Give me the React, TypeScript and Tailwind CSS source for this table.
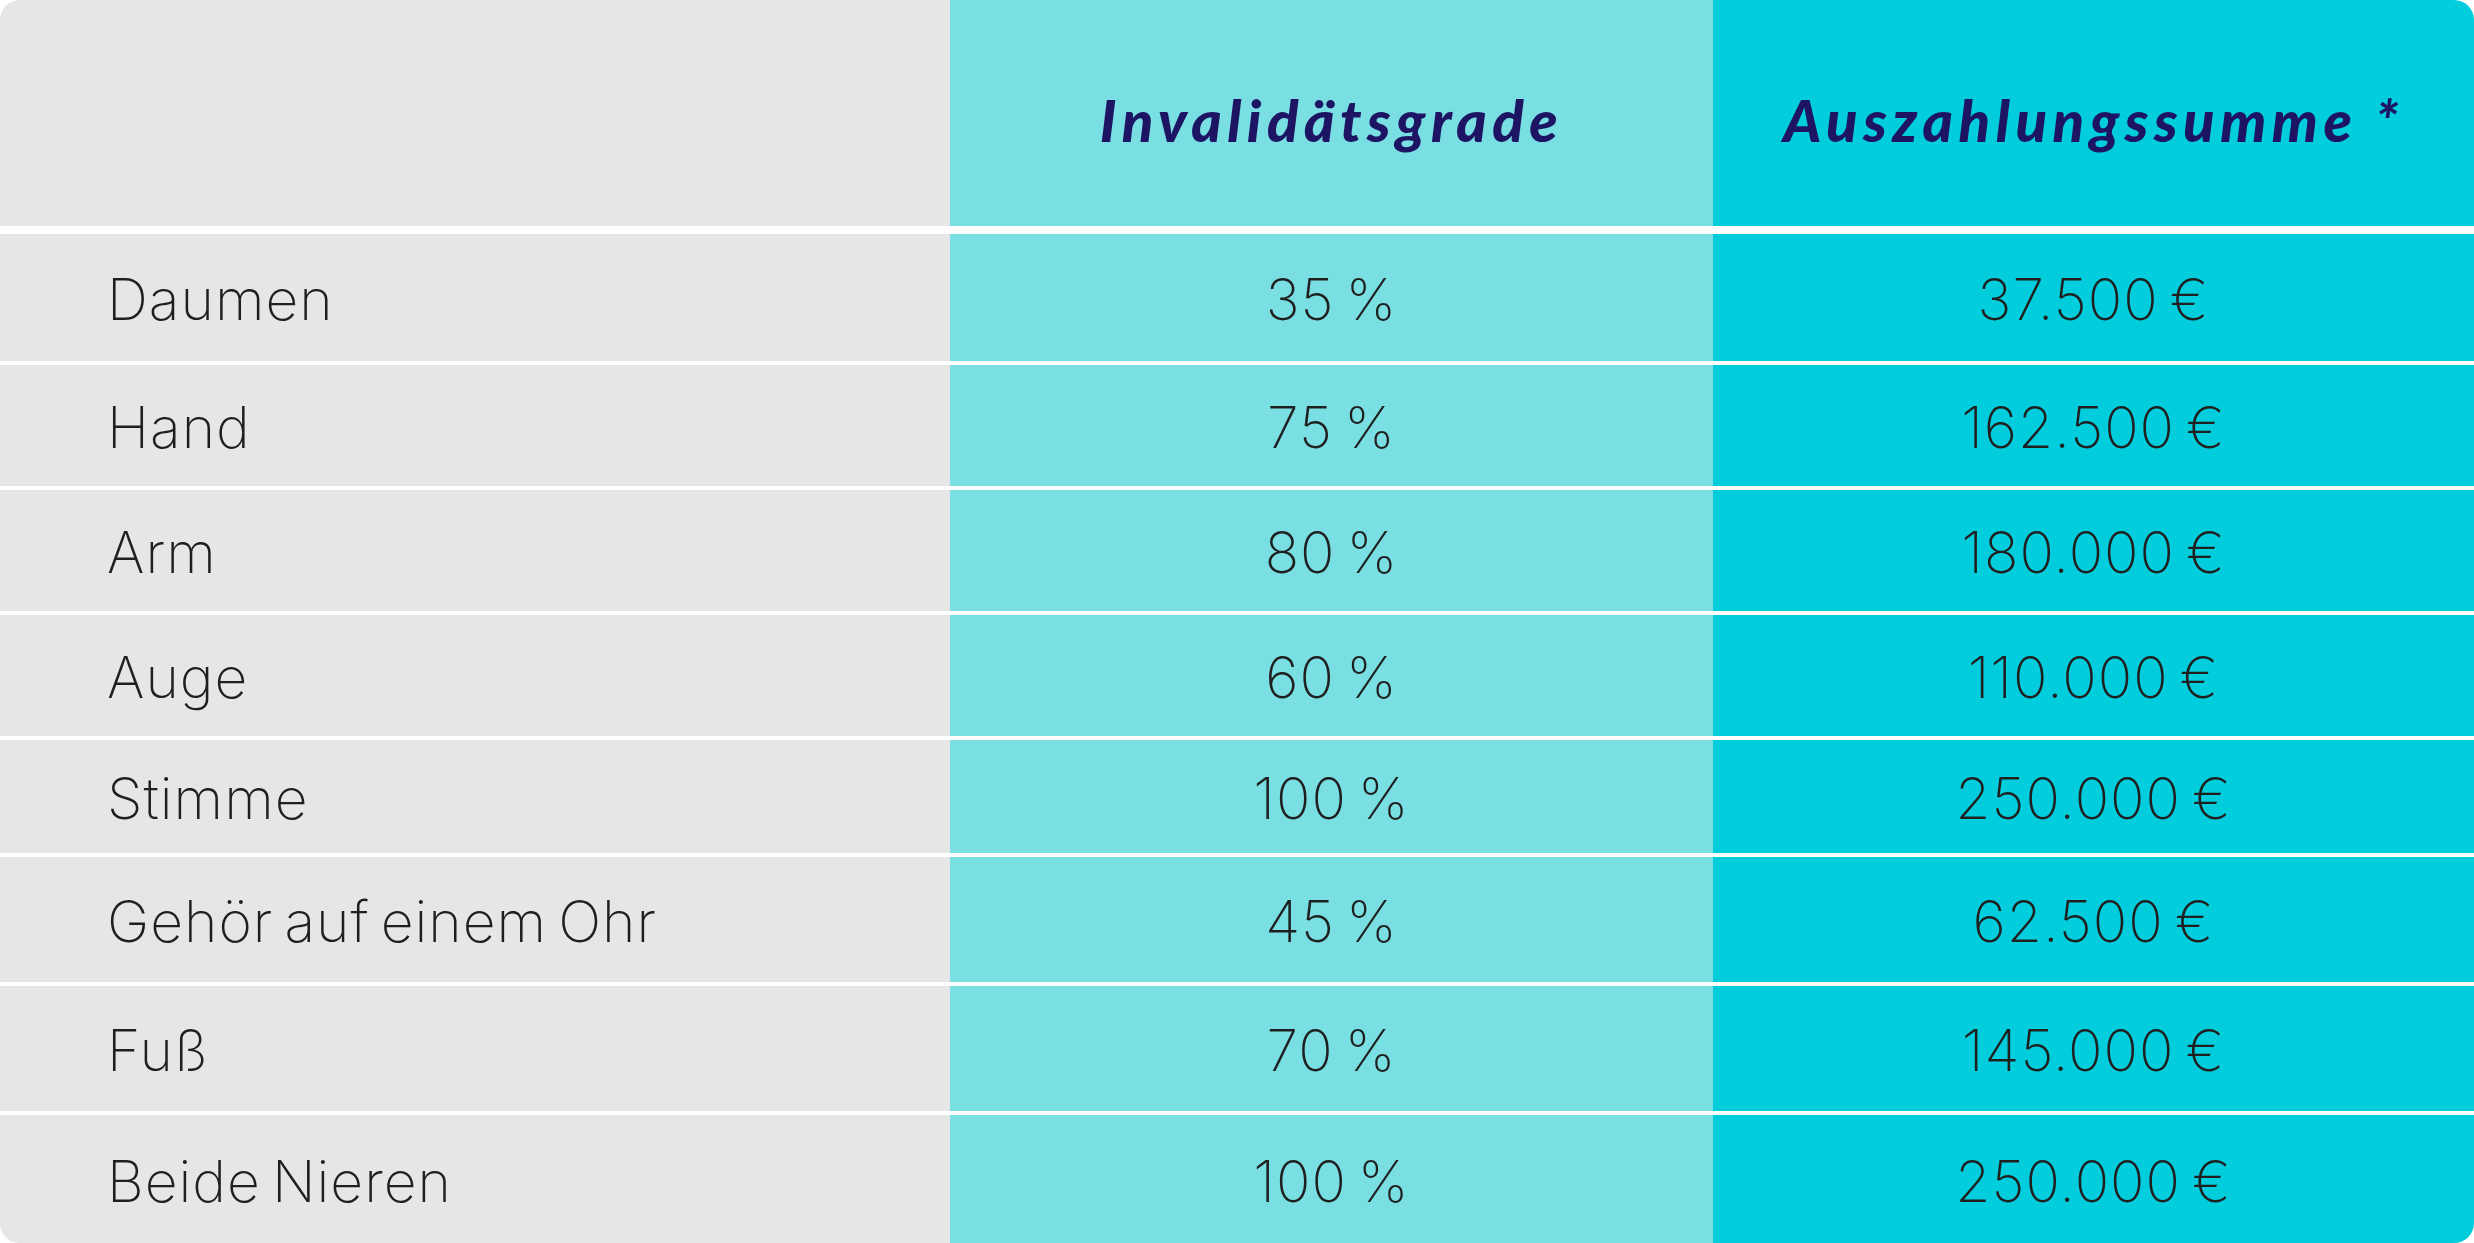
import React from "react";

const rows: { label: string; pct: string; sum: string; h: string }[] = [
  { label: "Daumen", pct: "35 %", sum: "37.500 €", h: "h-[127px]" },
  { label: "Hand", pct: "75 %", sum: "162.500 €", h: "h-[121px]" },
  { label: "Arm", pct: "80 %", sum: "180.000 €", h: "h-[121px]" },
  { label: "Auge", pct: "60 %", sum: "110.000 €", h: "h-[121px]" },
  { label: "Stimme", pct: "100 %", sum: "250.000 €", h: "h-[113px]" },
  { label: "Gehör auf einem Ohr", pct: "45 %", sum: "62.500 €", h: "h-[125px]" },
  { label: "Fuß", pct: "70 %", sum: "145.000 €", h: "h-[125px]" },
  { label: "Beide Nieren", pct: "100 %", sum: "250.000 €", h: "h-[128px]" },
];

const body =
  "text-[57px] font-extralight text-[#1f1f1f] leading-none tracking-[1px] [word-spacing:-6px]";
const head = "text-[58px] font-black italic text-[#1d1464] leading-none tracking-[5.5px]";

export default function App() {
  return (
    <div className="w-[2474px] h-[1243px] bg-white">
      <div className="w-[2474px] h-[1243px] rounded-[20px] overflow-hidden bg-white flex flex-col">
        <div
          className="h-[226px] grid grid-cols-[950px_763px_761px] shrink-0"
          style={{ fontFamily: "Lato, 'Open Sans', sans-serif" }}
        >
          <div className="bg-[#e6e6e6]" />
          <div className="bg-[#79dfe2] flex items-center justify-center pt-[14px]">
            <span className={head}>Invalidätsgrade</span>
          </div>
          <div className="bg-[#02cddc] flex items-center justify-center pt-[14px]">
            <span className={head}>Auszahlungssumme *</span>
          </div>
        </div>
        <div
          className="flex flex-col gap-[4px] mt-[8px]"
          style={{ fontFamily: "Inter, Lato, sans-serif" }}
        >
          {rows.map((r) => (
            <div key={r.label} className={`${r.h} grid grid-cols-[950px_763px_761px] shrink-0`}>
              <div className="bg-[#e6e6e6] flex items-center pl-[107px] pt-[4px]">
                <span className={body}>{r.label}</span>
              </div>
              <div className="bg-[#79dfe2] flex items-center justify-center pt-[4px]">
                <span className={body}>{r.pct}</span>
              </div>
              <div className="bg-[#02cddc] flex items-center justify-center pt-[4px]">
                <span className={body}>{r.sum}</span>
              </div>
            </div>
          ))}
        </div>
      </div>
    </div>
  );
}
